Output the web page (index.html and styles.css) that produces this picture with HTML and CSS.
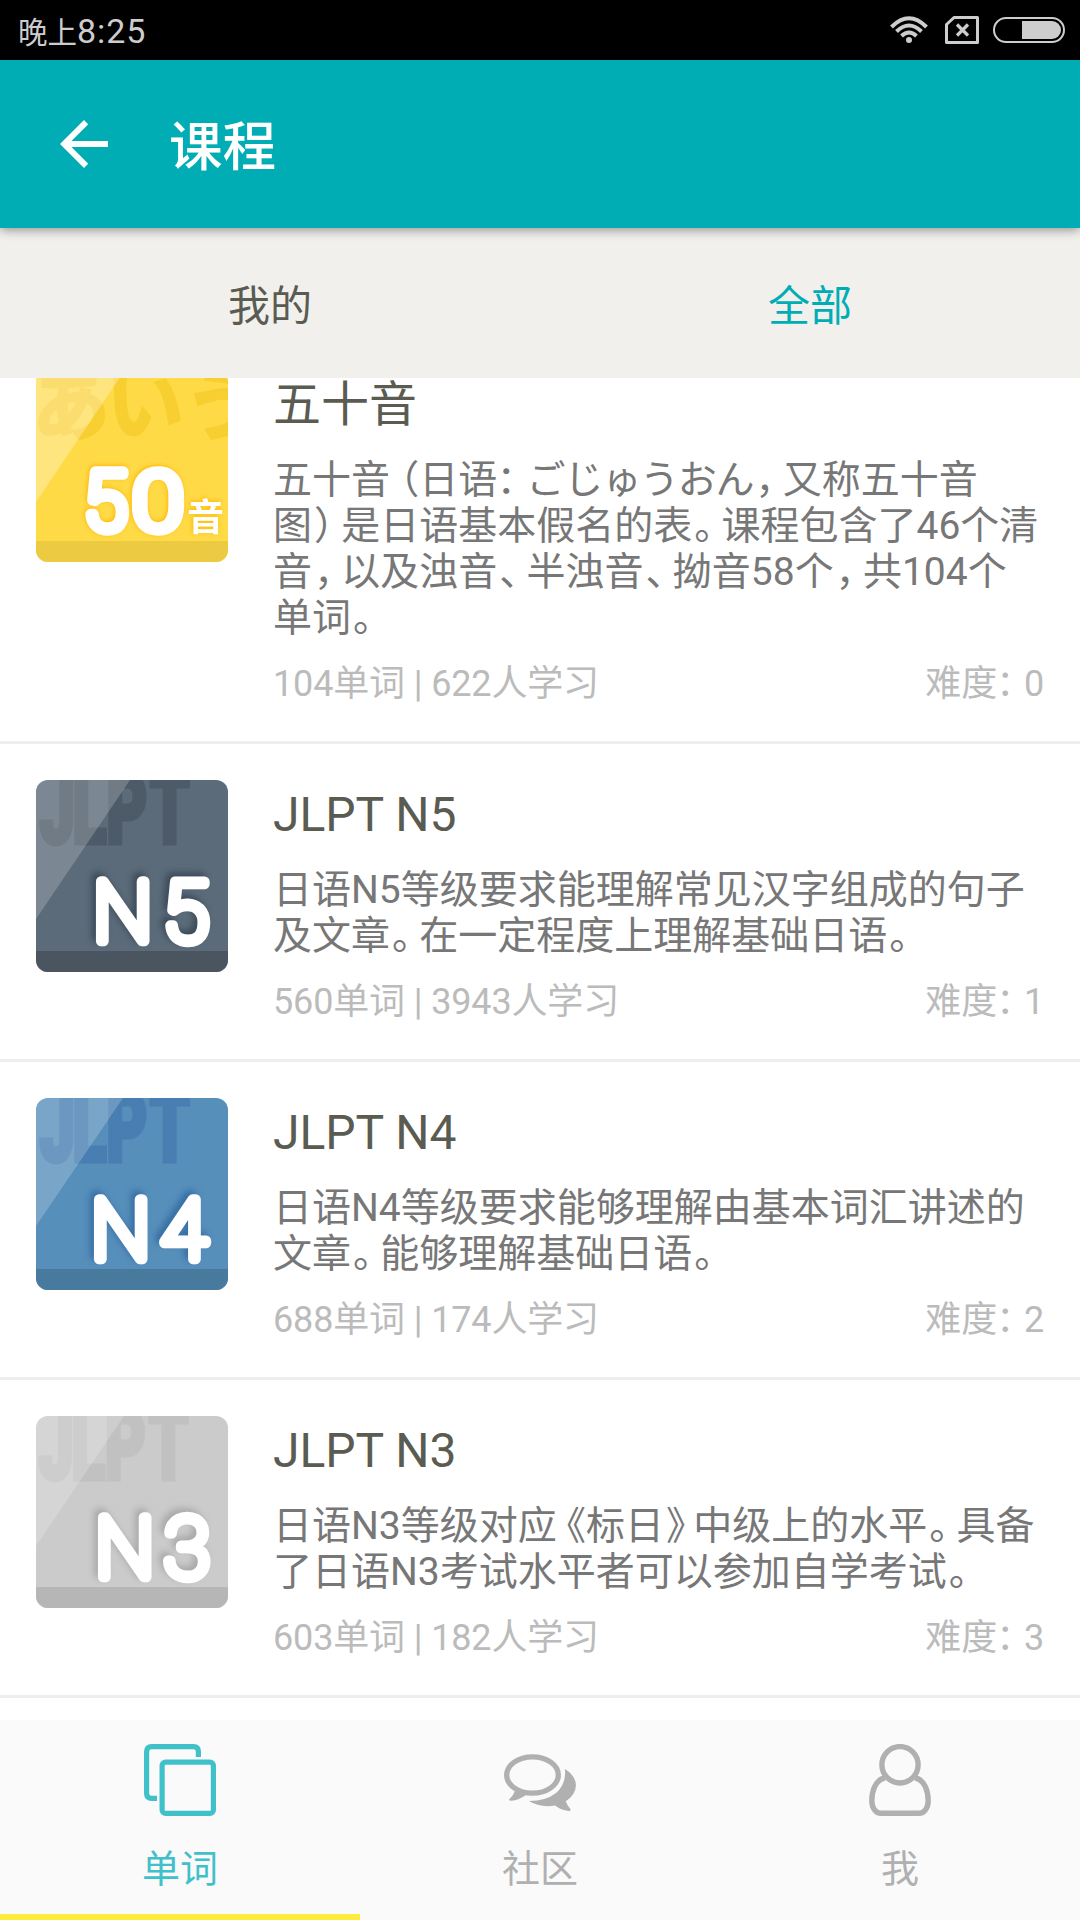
FILE: index.html
```html
<!DOCTYPE html>
<html lang="zh-CN">
<head>
  <meta charset="UTF-8">
  <meta name="viewport" content="width=device-width, initial-scale=1.0">
  <title>课程</title>
  <link rel="stylesheet" href="styles.css">
</head>
<body>
  <div class="app">
    <!-- Status Bar -->
    <div class="status-bar">
      <div class="clock">晚上<span>8:25</span></div>
      <div class="status-icons">
        <svg class="wifi" width="38" height="28" viewBox="0 0 38 28" fill="none" stroke="#cdcdcd" stroke-width="4">
          <path d="M1.5 11 Q19 -6.5 36.5 11" />
          <path d="M6.5 15.5 Q19 3.5 31.5 15.5" />
          <path d="M11.5 20 Q19 13 26.5 20" />
          <circle cx="19" cy="24" r="3" fill="#cdcdcd" stroke="none" />
        </svg>
        <svg class="sim" width="34" height="28" viewBox="0 0 34 28" fill="none" stroke="#cdcdcd" stroke-width="3">
          <path d="M9 1.5 H32.5 V26.5 H1.5 V8.5 Z" stroke-linejoin="round" />
          <path d="M12 8.5 L23 19.5 M23 8.5 L12 19.5" stroke-width="3.2" />
        </svg>
        <svg class="battery" width="72" height="26" viewBox="0 0 72 26">
          <rect x="1" y="1" width="70" height="24" rx="12" fill="none" stroke="#cdcdcd" stroke-width="2" />
          <path d="M29 4 H59 A9 9 0 0 1 59 22 H29 Z" fill="#cdcdcd" />
        </svg>
      </div>
    </div>

    <!-- Header -->
    <div class="header">
      <svg class="back" width="72" height="72" viewBox="0 0 24 24" fill="#fff">
        <path d="M20 11H7.83l5.59-5.59L12 4l-8 8 8 8 1.41-1.41L7.83 13H20v-2z" />
      </svg>
      <h1>课程</h1>
    </div>

    <!-- Tabs -->
    <div class="tabs">
      <div class="tab">我的</div>
      <div class="tab active">全部</div>
    </div>

    <!-- Course List -->
    <div class="list">
      <div class="course first">
        <svg class="cover yellow" width="192" height="192" viewBox="0 0 192 192">
          <rect class="bg" width="192" height="192" />
          <text class="mark-kana" x="-4 70 148" y="64">あいう</text>
          <path class="gloss" d="M0 0 H89 L0 132 Z" />
          <rect class="base" y="171" width="192" height="21" />
          <text class="name" x="48" y="159">5</text>
          <text class="name" x="97" y="159" textLength="50" lengthAdjust="spacingAndGlyphs">0</text>
          <text class="name-small" x="151" y="161">音</text>
        </svg>
        <div class="info">
          <h2>五十音</h2>
          <p class="desc">五十音<i class="po">（</i>日语<i class="pc colon">：</i><span class="kana">ごじゅうおん</span><i class="pc">，</i>又称五十音<br>图<i class="pc">）</i>是日语基本假名的表<i class="pc">。</i>课程包含了46个清<br>音<i class="pc">，</i>以及浊音<i class="pc">、</i>半浊音<i class="pc">、</i>拗音58个<i class="pc">，</i>共104个<br>单词<i class="pc">。</i></p>
          <div class="meta"><span>104单词 | 622人学习</span><span>难度<i class="pc colon">：</i>0</span></div>
        </div>
      </div>

      <div class="course">
        <svg class="cover slate" width="192" height="192" viewBox="0 0 192 192">
          <rect class="bg" width="192" height="192" />
          <text class="mark" transform="scale(.64 1)" x="6 57 110 178" y="63">JLPT</text>
          <path class="gloss" d="M0 0 H94 L0 139 Z" />
          <rect class="base" y="171" width="192" height="21" />
          <text class="name" x="57 127" y="161">N5</text>
        </svg>
        <div class="info">
          <h2>JLPT N5</h2>
          <p class="desc">日语N5等级要求能理解常见汉字组成的句子<br>及文章<i class="pc">。</i>在一定程度上理解基础日语<i class="pc">。</i></p>
          <div class="meta"><span>560单词 | 3943人学习</span><span>难度<i class="pc colon">：</i>1</span></div>
        </div>
      </div>

      <div class="course">
        <svg class="cover blue" width="192" height="192" viewBox="0 0 192 192">
          <rect class="bg" width="192" height="192" />
          <text class="mark" transform="scale(.64 1)" x="6 57 110 178" y="63">JLPT</text>
          <path class="gloss" d="M0 0 H87 L0 128 Z" />
          <rect class="base" y="171" width="192" height="21" />
          <text class="name" x="55 125" y="161">N4</text>
        </svg>
        <div class="info">
          <h2>JLPT N4</h2>
          <p class="desc">日语N4等级要求能够理解由基本词汇讲述的<br>文章<i class="pc">。</i>能够理解基础日语<i class="pc">。</i></p>
          <div class="meta"><span>688单词 | 174人学习</span><span>难度<i class="pc colon">：</i>2</span></div>
        </div>
      </div>

      <div class="course">
        <svg class="cover gray" width="192" height="192" viewBox="0 0 192 192">
          <rect class="bg" width="192" height="192" />
          <text class="mark" transform="scale(.64 1)" x="4 55 108 176" y="63">JLPT</text>
          <path class="gloss" d="M0 0 H88 L0 130 Z" />
          <rect class="base" y="171" width="192" height="21" />
          <text class="name" x="59 128" y="161">N3</text>
        </svg>
        <div class="info">
          <h2>JLPT N3</h2>
          <p class="desc">日语N3等级对应<i class="po">《</i>标日<i class="pc">》</i>中级上的水平<i class="pc">。</i>具备<br>了日语N3考试水平者可以参加自学考试<i class="pc">。</i></p>
          <div class="meta"><span>603单词 | 182人学习</span><span>难度<i class="pc colon">：</i>3</span></div>
        </div>
      </div>
    </div>

    <!-- Bottom Navigation -->
    <div class="nav">
      <div class="nav-item active">
        <svg width="72" height="72" viewBox="0 0 72 72" fill="none" stroke="currentColor" stroke-width="5.2">
          <path d="M13 54.4 H7.5 Q2.6 54.4 2.6 49.5 V7.5 Q2.6 2.6 7.5 2.6 H49.5 Q54.4 2.6 54.4 7.5 V13" />
          <rect x="18.1" y="18.1" width="51.3" height="51.3" rx="3.5" />
        </svg>
        <span>单词</span>
      </div>
      <div class="nav-item">
        <svg width="72" height="72" viewBox="0 -10 72 72" fill="currentColor">
          <ellipse cx="28.5" cy="21" rx="25.8" ry="18.2" fill="none" stroke="currentColor" stroke-width="5.3" />
          <path d="M11 34 L16.5 35 L18 37 L22 36 V41 Q14 46.5 7.4 46.7 Q4.5 47 5.3 45 Q10 41 11 36 Z" />
          <path d="M60.9 15 Q72 22 71.9 31.7 Q71.5 41 61.7 47.3 Q63 51 66.5 55.3 Q67 57.3 64.6 57 Q57 56 51 51.5 Q36 54 25 47 Q42 47 52 39 Q62.5 30 60.9 15 Z" />
        </svg>
        <span>社区</span>
      </div>
      <div class="nav-item">
        <svg width="62" height="72" viewBox="0 0 62 72" fill="none" stroke="currentColor" stroke-width="5.4">
          <ellipse cx="31" cy="20.8" rx="18.1" ry="18.2" />
          <path d="M16 34 C6 35.5 2.8 48 2.8 57 C2.8 64 7 69.3 12 69.3 H50 C55 69.3 59.2 64 59.2 57 C59.2 48 56 35.5 46 34" />
        </svg>
        <span>我</span>
      </div>
    </div>
  </div>
</body>
</html>
```
FILE: styles.css
```css
* {
  box-sizing: border-box;
}
body {
  margin: 0;
  font-family: Roboto, "Noto Sans CJK SC", sans-serif;
  background-color: #fff;
}
h1, h2, p {
  margin: 0;
  font-weight: 400;
}
i {
  font-style: normal;
}
.app {
  display: flex;
  flex-direction: column;
  width: 1080px;
  height: 1920px;
  overflow: hidden;
}

/* status bar */
.status-bar {
  display: flex;
  justify-content: space-between;
  align-items: center;
  height: 60px;
  padding: 0 15px 0 18px;
  background-color: #000;
  color: #cdcdcd;
}
.clock {
  font-size: 29.5px;
  line-height: 60px;
  padding-top: 3px;
}
.clock span {
  font-size: 34px;
  letter-spacing: 0.9px;
}
.status-icons {
  display: flex;
  align-items: center;
}
.sim {
  margin: 0 14px 0 17px;
}

/* header */
.header {
  display: flex;
  align-items: center;
  height: 168px;
  padding-left: 48px;
  background-color: #00adb5;
  color: #fff;
  box-shadow: 0 2px 10px rgba(0, 0, 0, 0.4);
  z-index: 1;
}
.header h1 {
  margin-left: 49px;
  padding-top: 8px;
  font-size: 53.5px;
  font-weight: 500;
  line-height: 64px;
}

/* tabs */
.tabs {
  display: flex;
  height: 150px;
  background-color: #f1f0ec;
}
.tab {
  flex: 1;
  font-size: 42px;
  line-height: 157px;
  text-align: center;
  color: #5a5b51;
}
.tab.active {
  color: #00adb5;
}

/* course list, scrolled a little */
.list {
  flex: 1;
  overflow: hidden;
}
.course {
  display: flex;
  gap: 45px;
  padding: 36px;
  border-bottom: 3px solid #eee;
}
.course.first {
  margin-top: -44px;
}
.cover {
  flex: none;
  border-radius: 12px;
}
.info {
  flex: 1;
  padding: 7px 0 0;
}
.info h2 {
  font-size: 48px;
  line-height: 56px;
  color: #5a5b51;
}
.desc {
  margin: 24px 0 22px;
  font-size: 39px;
  line-height: 46px;
  color: #777;
  white-space: nowrap;
}
.meta {
  display: flex;
  justify-content: space-between;
  font-size: 36px;
  line-height: 42px;
  letter-spacing: -0.15px;
  color: #bbb;
}
/* tighter full-width punctuation */
.po, .pc {
  font-feature-settings: "halt";
}
.po {
  margin-left: 0.25em;
}
.pc {
  margin: 0 0.2em 0 0.05em;
}
.pc.colon {
  margin: 0 0.27em 0 -0.02em;
}
.kana {
  letter-spacing: -1.2px;
}

/* covers */
.mark {
  font-family: Roboto, sans-serif;
  font-size: 98px;
  font-weight: 900;
  stroke-width: 5px;
}
.mark-kana {
  font-family: "Noto Sans CJK JP", sans-serif;
  font-size: 78px;
  font-weight: 700;
  fill: #f8cf30;
  stroke: #f8cf30;
  stroke-width: 2px;
}
.name {
  font-family: Roboto, sans-serif;
  font-size: 84px;
  font-weight: 100;
  fill: #fff;
  stroke: #fff;
  stroke-width: 10.5px;
  stroke-linejoin: round;
}
.name-small {
  font-family: "Noto Sans CJK SC", sans-serif;
  font-size: 37px;
  font-weight: 700;
  fill: #fff;
}
.gloss {
  fill: #fff;
  fill-opacity: 0.2;
}
.yellow .gloss {
  fill-opacity: 0.3;
}
.yellow .bg {
  fill: #ffda47;
}
.yellow .base {
  fill: #eccb42;
}
.yellow .name {
  font-size: 79px;
  stroke-width: 11.5px;
}
.yellow .name, .yellow .name-small {
  filter: drop-shadow(-1px -1px 2px #ffb800);
}
.slate .bg {
  fill: #5b6b79;
}
.slate .mark {
  fill: #4d5b68;
  stroke: #4d5b68;
}
.slate .base {
  fill: #4a5560;
}
.slate .name {
  filter: drop-shadow(-4px -4px 3px #3c4a5a);
}
.blue .bg {
  fill: #578fbb;
}
.blue .mark {
  fill: #487eb1;
  stroke: #487eb1;
}
.blue .base {
  fill: #487a9e;
}
.blue .name {
  filter: drop-shadow(-4px -4px 3px #376fa5);
}
.gray .bg {
  fill: #cbcbcb;
}
.gray .mark {
  fill: #c1c1c1;
  stroke: #c1c1c1;
}
.gray .base {
  fill: #b6b6b6;
}
.gray .name {
  filter: drop-shadow(-4px -4px 3px #aaa);
}

/* bottom navigation */
.nav {
  display: flex;
  height: 200px;
  background-color: #fafafa;
}
.nav-item {
  flex: 1;
  display: flex;
  flex-direction: column;
  align-items: center;
  padding-top: 24px;
  border-bottom: 6px solid transparent;
  color: #b0b0b0;
}
.nav-item.active {
  color: #40c1ca;
  border-bottom-color: #ffeb3b;
}
.nav-item span {
  margin-top: 30px;
  font-size: 38px;
  line-height: 46px;
}
```
